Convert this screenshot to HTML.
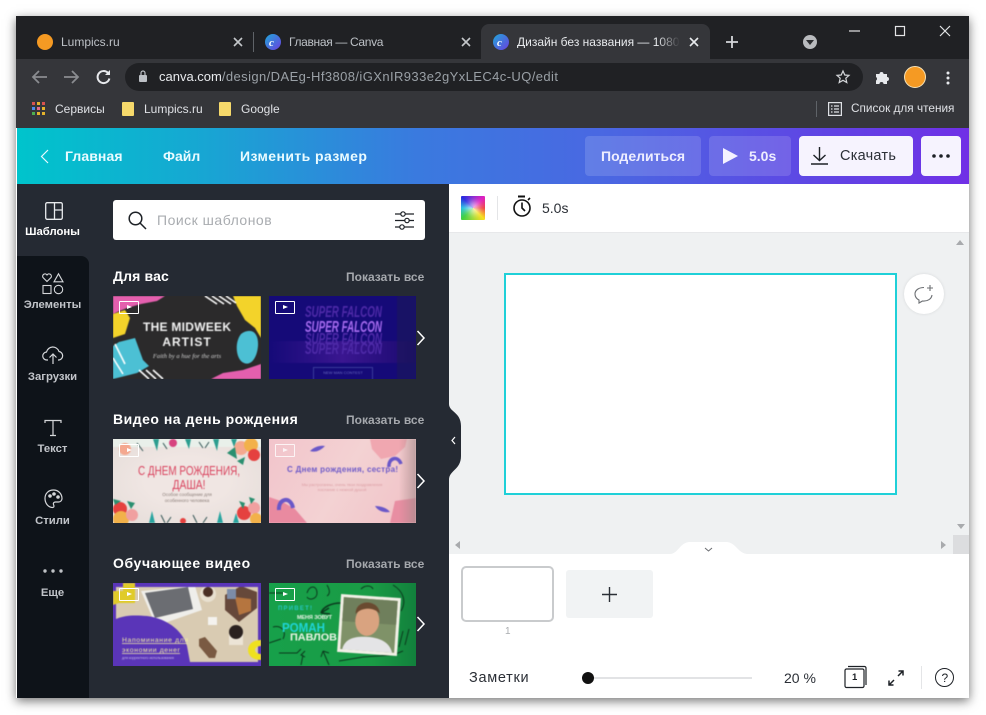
<!DOCTYPE html>
<html lang="ru"><head><meta charset="utf-8"><title>Canva</title>
<style>
*{box-sizing:border-box}
html,body{margin:0;padding:0;background:#fff;width:986px;height:715px;overflow:hidden;font-family:"Liberation Sans","Noto Sans CJK SC",sans-serif}
.a{position:absolute}
.t{position:absolute;white-space:nowrap;line-height:1}
svg{position:absolute;overflow:visible}
.b{font-weight:700}
.side{color:#c2c5ca;font-size:11.3px;font-weight:700;text-align:center;width:73px;left:16px}
.show{color:#a5a8ad;font-size:12px;font-weight:700;left:346px}
.h{color:#fff;font-size:14px;font-weight:700;left:113px}
.badge{position:absolute;left:6px;top:5px;width:20px;height:13px;border:1.5px solid #fff;border-radius:1px}
.badge:after{content:"";position:absolute;left:6.5px;top:2.500px;border-left:5px solid #fff;border-top:2.5px solid transparent;border-bottom:2.5px solid transparent}
</style></head><body>
<div class="a" id="win" style="left:16px;top:16px;width:953px;height:682px;background:#fff;box-shadow:0 3px 10px rgba(0,0,0,.55)"></div>

<!-- tab strip -->
<div class="a" style="left:16px;top:16px;width:953px;height:43px;background:#202124"></div>
<div class="a" style="left:481px;top:24px;width:229px;height:35px;background:#35363a;border-radius:8px 8px 0 0"></div>
<div class="a" style="left:16px;top:59px;width:953px;height:69px;background:#35363a"></div>
<div class="a" style="left:253px;top:32px;width:1px;height:20px;background:#5f6368"></div>

<div class="a" style="left:37px;top:34px;width:16px;height:16px;border-radius:50%;background:#f59a23"></div>
<div class="t" style="left:61px;top:36px;font-size:12px;color:#bdc1c6">Lumpics.ru</div>
<svg style="left:233px;top:37px" width="10" height="10" stroke="#c4c7ca" stroke-width="1.6"><path d="M1 1l8 8M9 1l-8 8"/></svg>

<div class="a" style="left:265px;top:34px;width:16px;height:16px;border-radius:50%;background:linear-gradient(135deg,#1fa7d8,#6b3fe0)"></div>
<div class="t" style="left:269px;top:36.5px;font:italic 700 11px 'Liberation Serif',serif;color:#fff">c</div>
<div class="t" style="left:289px;top:36px;font-size:12px;color:#bdc1c6;letter-spacing:-.33px">Главная — Canva</div>
<svg style="left:461px;top:37px" width="10" height="10" stroke="#c4c7ca" stroke-width="1.6"><path d="M1 1l8 8M9 1l-8 8"/></svg>

<div class="a" style="left:493px;top:34px;width:16px;height:16px;border-radius:50%;background:linear-gradient(135deg,#1fa7d8,#6b3fe0)"></div>
<div class="t" style="left:497px;top:36.5px;font:italic 700 11px 'Liberation Serif',serif;color:#fff">c</div>
<div class="t" style="left:517px;top:36px;font-size:12px;color:#e8eaed;width:163px;overflow:hidden;-webkit-mask-image:linear-gradient(90deg,#000 86%,transparent 100%)">Дизайн без названия — 1080</div>
<svg style="left:689px;top:37px" width="10" height="10" stroke="#e8eaed" stroke-width="1.6"><path d="M1 1l8 8M9 1l-8 8"/></svg>
<svg style="left:726px;top:36px" width="12" height="12" stroke="#d5d7da" stroke-width="1.8"><path d="M6 0v12M0 6h12"/></svg>
<div class="a" style="left:803px;top:35px;width:14px;height:14px;border-radius:50%;background:#b9bbbe"></div>
<div class="a" style="left:806px;top:40px;border-top:5px solid #2b2c2f;border-left:4px solid transparent;border-right:4px solid transparent"></div>
<svg style="left:849px;top:25px" width="112" height="12" stroke="#e4e5e7" stroke-width="1.2" fill="none"><path d="M0 6h11"/><rect x="46.5" y="1.5" width="9" height="9"/><path d="M91 1l10 10M101 1l-10 10"/></svg>

<!-- toolbar -->
<svg style="left:31px;top:68px" width="90" height="18" fill="none" stroke-width="1.8"><path d="M16 9H2M8 3L2 9l6 6" stroke="#8a8c90"/><path d="M33 9h14M41 3l6 6-6 6" stroke="#8a8c90"/><path d="M77 5a6 6 0 1 0 1.4 5.5" stroke="#e8eaed" stroke-width="2"/><path d="M79 2v5h-5z" fill="#e8eaed" stroke="none"/></svg>
<div class="a" style="left:125px;top:63px;width:738px;height:28px;border-radius:14px;background:#202124"></div>
<svg style="left:138px;top:70px" width="10" height="13"><rect x="1" y="5" width="8" height="7" rx="1" fill="#bdc1c6"/><path d="M3 5V3a2 2 0 0 1 4 0v2" stroke="#bdc1c6" fill="none" stroke-width="1.2"/></svg>
<div class="t" style="left:159px;top:70px;font-size:13px;color:#e8eaed">canva.com<span style="color:#9aa0a6;letter-spacing:.41px">/design/DAEg-Hf3808/iGXnIR933e2gYxLEC4c-UQ/edit</span></div>
<svg style="left:836px;top:70px" width="14" height="14" fill="none" stroke="#d5d7da" stroke-width="1.2"><path d="M7 1l1.8 4 4.2.4-3.2 2.8 1 4.3L7 10.3 3.2 12.500l1-4.300L1 5.400 5.200 5z"/></svg>
<svg style="left:875px;top:70px" width="15" height="14" fill="#e8eaed"><path d="M1 4h3.500a2 2 0 0 1 4 0H12v3a2 2 0 0 1 0 4v3H8.500a2 2 0 0 0-4 0H1v-3.500a2 2 0 0 0 0-3.500z"/></svg>
<div class="a" style="left:904px;top:66px;width:22px;height:22px;border-radius:50%;background:#f59a23;border:1px solid #f7e3b8"></div>
<svg style="left:946px;top:71px" width="4" height="14" fill="#e8eaed"><circle cx="2" cy="2" r="1.500"/><circle cx="2" cy="7" r="1.500"/><circle cx="2" cy="12" r="1.500"/></svg>

<!-- bookmarks -->
<svg style="left:32px;top:102px" width="14" height="14"><g fill="#d9534f"><rect width="3" height="3"/></g><rect x="5" width="3" height="3" fill="#e4b32c"/><rect x="10" width="3" height="3" fill="#d9534f"/><rect y="5" width="3" height="3" fill="#4c8bf0"/><rect x="5" y="5" width="3" height="3" fill="#e06b8b"/><rect x="10" y="5" width="3" height="3" fill="#e4b32c"/><rect y="10" width="3" height="3" fill="#4caf50"/><rect x="5" y="10" width="3" height="3" fill="#e4b32c"/><rect x="10" y="10" width="3" height="3" fill="#e4b32c"/></svg>
<div class="t" style="left:55px;top:103px;font-size:12px;color:#dfe1e5">Сервисы</div>
<div class="a" style="left:122px;top:102px;width:12px;height:14px;background:#f6d96b;border-radius:1px"></div>
<div class="t" style="left:144px;top:103px;font-size:12px;color:#dfe1e5">Lumpics.ru</div>
<div class="a" style="left:219px;top:102px;width:12px;height:14px;background:#f6d96b;border-radius:1px"></div>
<div class="t" style="left:241px;top:103px;font-size:12px;color:#dfe1e5">Google</div>
<div class="a" style="left:816px;top:101px;width:1px;height:16px;background:#5f6368"></div>
<svg style="left:828px;top:102px" width="14" height="14" fill="none" stroke="#dfe1e5" stroke-width="1.200"><rect x=".6" y=".6" width="12.800" height="12.800"/><path d="M3 4h1.500M3 7h1.500M3 10h1.500M6 4h5M6 7h5M6 10h5"/></svg>
<div class="t" style="left:851px;top:103px;font-size:11.8px;color:#dfe1e5">Список для чтения</div>

<!-- canva header -->
<div class="a" style="left:17px;top:128px;width:952px;height:56px;background:linear-gradient(90deg,#00c4cc 0%,#15a9d2 18%,#3a7adf 42%,#4a67e2 62%,#6044e4 85%,#7030e6 100%)"></div>
<svg style="left:40px;top:149px" width="10" height="15" fill="none" stroke="#e9fbff" stroke-width="1.200"><path d="M8 1L1.500 7.500 8 14"/></svg>
<div class="t b" style="left:65px;top:149px;font-size:14px;color:#e9fbff;letter-spacing:.1px">Главная</div>
<div class="t b" style="left:163px;top:149px;font-size:14px;color:#e9fbff">Файл</div>
<div class="t b" style="left:240px;top:149px;font-size:14px;color:#e9fbff;letter-spacing:.42px">Изменить размер</div>
<div class="a" style="left:585px;top:136px;width:116px;height:40px;border-radius:4px;background:rgba(255,255,255,.14)"></div>
<div class="t b" style="left:601px;top:149px;font-size:14px;color:#eef">Поделиться</div>
<div class="a" style="left:709px;top:136px;width:82px;height:40px;border-radius:4px;background:rgba(255,255,255,.14)"></div>
<div class="a" style="left:723px;top:148px;border-left:15px solid #f4f2ff;border-top:8px solid transparent;border-bottom:8px solid transparent"></div>
<div class="t b" style="left:749px;top:149px;font-size:14px;color:#eef">5.0s</div>
<div class="a" style="left:799px;top:136px;width:114px;height:40px;border-radius:4px;background:#f6f3fe"></div>
<svg style="left:810px;top:147px" width="19" height="18" fill="none" stroke="#1d2126" stroke-width="1.400"><path d="M9.500 0v13M3.500 8l6 5.500 6-5.500M1 17h17"/></svg>
<div class="t" style="left:840px;top:148.500px;font-size:14.500px;color:#2b2f36;letter-spacing:.25px">Скачать</div>
<div class="a" style="left:921px;top:136px;width:40px;height:40px;border-radius:4px;background:#f6f3fe"></div>
<svg style="left:932px;top:154px" width="18" height="4" fill="#1d2126"><circle cx="2" cy="2" r="1.800"/><circle cx="9" cy="2" r="1.800"/><circle cx="16" cy="2" r="1.800"/></svg>

<!-- left panel -->
<div class="a" style="left:17px;top:184px;width:432px;height:514px;background:#252a33"></div>
<div class="a" style="left:17px;top:256px;width:72px;height:442px;background:#0e1319;border-radius:0 8px 0 0"></div>

<svg style="left:45px;top:202px" width="18" height="18" fill="none" stroke="#e8eaed" stroke-width="1.300"><rect x=".7" y=".7" width="16.600" height="16.600" rx="1.500"/><path d="M9.500 1v16M9.500 8h8"/></svg>
<div class="t side" style="top:227px;color:#fff">Шаблоны</div>
<svg style="left:42px;top:273px" width="22" height="22" fill="none" stroke="#d5d7da" stroke-width="1.100"><path d="M5 8.500L1 4.500a2.300 2.300 0 0 1 4-2.500 2.300 2.300 0 0 1 4 2.500z"/><path d="M16.500 .8l4.500 8h-9z"/><rect x="1" y="12.500" width="8" height="8"/><circle cx="16.500" cy="16.500" r="4.200"/></svg>
<div class="t side" style="top:300px">Элементы</div>
<svg style="left:42px;top:345px" width="22" height="20" fill="none" stroke="#d5d7da" stroke-width="1.200"><path d="M6 15H5a4 4 0 0 1-.5-8A6.500 6.500 0 0 1 17 6.500 4.300 4.300 0 0 1 17 15h-1"/><path d="M11 19V9M7.500 12.500L11 9l3.500 3.500"/></svg>
<div class="t side" style="top:372px">Загрузки</div>
<svg style="left:44px;top:419px" width="18" height="18" fill="none" stroke="#d5d7da" stroke-width="1.200"><path d="M1 4V1.500h16V4M9 1.500V16.500M6 16.500h6"/></svg>
<div class="t side" style="top:444px">Текст</div>
<svg style="left:44px;top:489px" width="19" height="20" fill="none" stroke="#d5d7da" stroke-width="1.200"><path d="M9.500 1C4.500 1 1 4.500 1 9.500c0 5 3.500 9 7.500 9 2 0 1.500-2 1-3-.5-1.500.5-2.500 2-2.500h3c2 0 3.500-1.500 3.500-3.500C18 5 14.500 1 9.500 1z"/><circle cx="6" cy="7" r="1.200" fill="#d5d7da"/><circle cx="10" cy="5" r="1.200" fill="#d5d7da"/><circle cx="14" cy="8" r="1.200" fill="#d5d7da"/></svg>
<div class="t side" style="top:516px">Стили</div>
<svg style="left:43px;top:569px" width="20" height="4" fill="#bfc2c6"><circle cx="2" cy="2" r="1.700"/><circle cx="10" cy="2" r="1.700"/><circle cx="18" cy="2" r="1.700"/></svg>
<div class="t side" style="top:588px">Еще</div>

<div class="a" style="left:113px;top:200px;width:312px;height:40px;background:#fff;border-radius:3px"></div>
<svg style="left:128px;top:211px" width="19" height="19" fill="none" stroke="#1d2126" stroke-width="1.500"><circle cx="7.500" cy="7.500" r="6.300"/><path d="M12 12l6 6"/></svg>
<div class="t" style="left:157px;top:212.500px;font-size:14px;color:#a9acb0;letter-spacing:.5px">Поиск шаблонов</div>
<svg style="left:395px;top:211px" width="20" height="19" fill="#fff" stroke="#1d2126" stroke-width="1.200"><path d="M0 3h19M0 9.500h19M0 16h19"/><circle cx="8" cy="3" r="2.200"/><circle cx="12" cy="9.500" r="2.200"/><circle cx="7" cy="16" r="2.200"/></svg>

<div class="t h" style="top:269px;letter-spacing:.15px">Для вас</div><div class="t show" style="top:271px">Показать все</div>
<div class="t h" style="top:412px;letter-spacing:.5px">Видео на день рождения</div><div class="t show" style="top:414px">Показать все</div>
<div class="t h" style="top:556px;letter-spacing:.6px">Обучающее видео</div><div class="t show" style="top:558px">Показать все</div>

<!-- thumbs row 1 -->
<div class="a" style="left:113px;top:296px;width:148px;height:83px;overflow:hidden;background:#2b2a2b">
<svg width="148" height="83" style="left:0;top:0;filter:blur(.4px)">
<path d="M0 0H52L44 5 28 8 14 12 4 16 0 18z" fill="#e45fae"/><path d="M0 18L12 14 17 22 12 38 0 42z" fill="#f3d32a"/><path d="M0 50l6-4 16-4 8 22 6 6-12 7-24 6z" fill="#4cc0d4"/>
<path d="M120 0h28v42l-6-10-10-8-8-14z" fill="#f3d32a"/><path d="M128 38c8-6 18-4 17 12-1 12-7 20-14 17-8-3-10-20-3-29z" fill="#4cc0d4"/><path d="M148 68V83H98l12-6 20-3z" fill="#e45fae"/>
<path d="M92 0l12 8M99 0l12 8M106 0l12 8M113 0l10 7" stroke="#fff" stroke-width="1.600"/><path d="M2 48l10 20M0 62l10 16M26 74l10 9M33 74l10 9M40 74l10 9" stroke="#fff" stroke-width="1.600"/>
<text x="74" y="35" text-anchor="middle" font-family="Liberation Sans" font-weight="700" font-size="12" fill="#f2f2f2" textLength="88" lengthAdjust="spacing">THE MIDWEEK</text>
<text x="74" y="50" text-anchor="middle" font-family="Liberation Sans" font-weight="700" font-size="12" fill="#f2f2f2" letter-spacing="1">ARTIST</text>
<text x="74" y="62" text-anchor="middle" font-family="Liberation Serif" font-style="italic" font-size="6.500" fill="#cfcfcf">Faith by a hue for the arts</text>
</svg><div class="badge"></div></div>

<div class="a" style="left:269px;top:296px;width:147px;height:83px;overflow:hidden;background:#150a78">
<svg width="147" height="83" style="left:0;top:0;filter:blur(.5px)">
<defs><linearGradient id="g1" x1="0" x2="1"><stop offset="0" stop-color="#150a78"/><stop offset=".5" stop-color="#3a1690"/><stop offset="1" stop-color="#1a0a70"/></linearGradient></defs>
<rect y="45" width="147" height="22" fill="url(#g1)"/><rect x="128" width="19" height="83" fill="#1b1a52" opacity=".5"/>
<g font-family="Liberation Sans" font-style="italic" font-weight="700" font-size="16" fill="#4e2aa8"><text x="36" y="21" textLength="77" lengthAdjust="spacingAndGlyphs">SUPER FALCON</text><text x="36" y="48" textLength="77" lengthAdjust="spacingAndGlyphs">SUPER FALCON</text><text x="36" y="58" textLength="77" lengthAdjust="spacingAndGlyphs">SUPER FALCON</text></g>
<text x="36" y="36" font-family="Liberation Sans" font-style="italic" font-weight="700" font-size="16" fill="#a86cf0" textLength="77" lengthAdjust="spacingAndGlyphs">SUPER FALCON</text>
<rect x="44.500" y="71.500" width="59" height="14" fill="none" stroke="#3a3a9a"/><text x="74" y="78" text-anchor="middle" font-size="4" font-family="Liberation Sans" fill="#6a6ac0">NEW MAN CONTEST</text>
</svg><div class="badge"></div></div>

<!-- thumbs row 2 -->
<div class="a" style="left:113px;top:439px;width:148px;height:84px;overflow:hidden;background:radial-gradient(ellipse at center,#f0e6e3 40%,#e4dcd8 100%)">
<svg width="148" height="84" style="left:0;top:0;filter:blur(.5px)">
<g><rect width="148" height="8" fill="#e9f0ea"/><circle cx="128" cy="9" r="7" fill="#f4a88f"/><circle cx="138" cy="6" r="7" fill="#f2b14a"/><circle cx="141" cy="16" r="6" fill="#e5413f"/><path d="M114 14l8-6 2 12zM124 22l8-4-2 8z" fill="#2a8f70"/><path d="M40 0h6l-2 12zM72 0h6l-2 10zM100 0h6l-2 12zM118 0h6l-3 8z" fill="#2a9d8f"/><circle cx="60" cy="4" r="4" fill="#d7437f"/><circle cx="12" cy="10" r="6" fill="#f4a88f"/><path d="M24 4l6 8M50 4l4 6M86 3l4 6M92 9l4-6" stroke="#355" stroke-width="1"/></g>
<g><circle cx="7" cy="70" r="7" fill="#e5413f"/><circle cx="8" cy="80" r="8" fill="#f2b14a"/><circle cx="19" cy="76" r="6" fill="#f0a0a0"/><path d="M14 62l8 2-4 6zM0 60l8 2-6 4z" fill="#2a8f70"/><path d="M36 84l3-12 3 12zM104 84l3-12 3 12zM120 84l3-10 3 10z" fill="#2aa5a0"/><circle cx="70" cy="82" r="3" fill="#e5413f"/><path d="M48 76l4 8M54 84l4-6M80 76l4 8M90 84l4-6" stroke="#355" stroke-width="1"/><circle cx="131" cy="74" r="7" fill="#e5413f"/><circle cx="141" cy="69" r="6" fill="#f0a0a0"/><circle cx="143" cy="80" r="6" fill="#f2b14a"/><path d="M126 62l6 2-2 6zM136 58l6 2-4 5z" fill="#2a8f70"/></g>
<g fill="#d9435e" font-family="Liberation Sans" font-size="12.500" text-anchor="middle"><text x="76" y="36" textLength="102" lengthAdjust="spacingAndGlyphs">С ДНЕМ РОЖДЕНИЯ,</text><text x="76" y="50" textLength="33" lengthAdjust="spacingAndGlyphs">ДАША!</text></g>
<g fill="#8a7d78" font-family="Liberation Sans" font-size="4.500" text-anchor="middle"><text x="74" y="57">Особое сообщение для</text><text x="74" y="63">особенного человека</text></g>
</svg><div class="badge"></div></div>

<div class="a" style="left:269px;top:439px;width:147px;height:84px;overflow:hidden;background:linear-gradient(120deg,#f2c4cb,#f3d2d3 50%,#f1c1c6)">
<svg width="147" height="84" style="left:0;top:0;filter:blur(.4px)">
<defs><linearGradient id="g2" x1="0" x2="1"><stop offset="0" stop-color="#a88" stop-opacity="0"/><stop offset="1" stop-color="#a08a8a" stop-opacity=".65"/></linearGradient></defs>
<path d="M101 0h37l-2 8-10 9-14 3-9-10z" fill="#f0a7b0"/><path d="M0 58l12 4 14 8 12 14H0z" fill="#e98aa0"/><path d="M126 62l21-3v25h-26z" fill="#e88ea2"/><rect x="130" width="17" height="84" fill="url(#g2)"/>
<path d="M120 28c-1-9 9-12 12-3" fill="none" stroke="#6a57c8" stroke-width="3.500"/><path d="M10 71c-1-12 12-14 14-2" fill="none" stroke="#6a57c8" stroke-width="4"/><path d="M41 12c4-4 10-6 15-5-4 4-9 7-15 5zM106 67c6 0 12 2 15 6-6 1-12-1-15-6z" fill="#6a57c8"/>
<text x="18" y="33" font-family="Liberation Sans" font-size="8" font-weight="700" fill="#6d5ac8" textLength="111" lengthAdjust="spacing">С Днем рождения, сестра!</text>
<g fill="#dc9ea4" font-size="4" font-family="Liberation Sans" text-anchor="middle"><text x="73" y="47">Мы растроганны, очень твои поздравления</text><text x="73" y="52">послание с нежной душой</text></g>
</svg><div class="badge" style="opacity:.8"></div></div>

<!-- thumbs row 3 -->
<div class="a" style="left:113px;top:583px;width:148px;height:83px;overflow:hidden;background:#5a35b8">
<svg width="148" height="83" style="left:0;top:0;filter:blur(.5px)">
<rect x="3" y="4" width="142" height="75" fill="#d9cbb2"/>
<path d="M28 8L82 3l7 24-46 16z" fill="#efeeea"/><path d="M32 10l43-6 5 22-38 9z" fill="#6b6d72"/>
<path d="M112 12l16-9 16 6v16l-18 14-14-12z" fill="#66483a"/><path d="M122 14l16 2v12l-12 4z" fill="#b5753f"/><rect x="114" y="6" width="9" height="10" fill="#7c8ca8"/>
<circle cx="95" cy="11" r="8" fill="#e8e0d0"/><circle cx="95" cy="9" r="5" fill="#4a2f24"/>
<rect x="116" y="50" width="14" height="12" fill="#ece4d6"/><circle cx="123" cy="49" r="7" fill="#2a211f"/><rect x="95" y="34" width="9" height="8" fill="#f4f2ee"/><path d="M86 56l6-2 12 14-2 7-6 0-10-12z" fill="#7a5a42"/>
<path d="M3 79V36C12 32 22 32 34 33c22 3 36 16 40 30l3 16z" fill="#5a35b8"/>
<rect y="79" width="148" height="4" fill="#5a35b8"/><rect width="148" height="4" fill="#5a35b8"/>
<path d="M0 8h10V0h12v20H6l-6 2z" fill="#e0cb2a"/><path d="M148 57c-9 0-13 5-13 10s4 10 13 10v-6c-4 0-6-2-6-4s2-4 6-4z" fill="#efe11f"/>
<g fill="#f2eca6" font-family="Liberation Sans" font-size="6.800"><text x="9" y="59" textLength="66" lengthAdjust="spacing">Напоминание для</text><text x="9" y="69" textLength="58" lengthAdjust="spacing">экономии денег</text></g>
<path d="M9 60.500h66M9 70.500h58" stroke="#f2eca6" stroke-width=".8"/><text x="9" y="76" font-size="3.500" fill="#c4b6e8" font-family="Liberation Sans">для корректного использования</text>
</svg><div class="badge"></div></div>

<div class="a" style="left:269px;top:583px;width:147px;height:83px;overflow:hidden;background:linear-gradient(90deg,#17a04a,#1a9b45 70%,#12803c)">
<svg width="147" height="83" style="left:0;top:0;filter:blur(.5px)">
<g fill="none" stroke="#0b3a1e" stroke-width="1"><path d="M38 10c2-8 10-8 10 0 0 6-8 8-10 4M58 2c3 5 3 9 0 11M92 6c4-4 10-4 12 0M124 2c10 6 14 16 8 26M0 10h14M4 44c8-2 14 4 10 12M0 60l12-4M10 70h18l4-4M34 72l-2 10M36 68l-4 4 4 2M54 68l6 14M54 68l-2 6M54 68l6 2M70 78l24-4 30-2 10-4M128 46l-4 16M134 48l-4 16M140 46l-4 16"/><path d="M72 20c-10 0-18 4-20 10M52 30l8-5M52 30l9 1" stroke-width="1.600"/></g>
<g transform="rotate(4 100 42)"><rect x="70" y="13" width="60" height="58" fill="#f2f0e6"/><rect x="73" y="16" width="54" height="52" fill="#7f9268"/><rect x="73" y="16" width="54" height="24" fill="#6f7f5c"/><path d="M75 68c2-12 14-14 24-14s22 2 26 14z" fill="#e4e4e6"/><ellipse cx="98" cy="38" rx="12" ry="15" fill="#d9a380"/><path d="M86 32c-2-15 22-17 24-2-6-6-18-6-24 2z" fill="#6a4a30"/></g>
<text x="9" y="27" font-size="6" font-weight="700" font-family="Liberation Sans" fill="#27c6c2" textLength="34" lengthAdjust="spacing">ПРИВЕТ!</text>
<text x="28" y="36" font-size="5.500" font-weight="700" font-family="Liberation Sans" fill="#ecf5e8" textLength="35" lengthAdjust="spacing">МЕНЯ ЗОВУТ</text>
<text x="13" y="49" font-size="13" font-weight="700" font-family="Liberation Sans" fill="#1fd4d6" textLength="43" lengthAdjust="spacingAndGlyphs">РОМАН</text>
<text x="21" y="57.500" font-size="10.500" font-weight="700" font-family="Liberation Sans" fill="#ecf5e8" textLength="47" lengthAdjust="spacingAndGlyphs">ПАВЛОВ</text>
</svg><div class="badge"></div></div>

<svg style="left:416px;top:329px" width="10" height="304" fill="none" stroke="#fff" stroke-width="1.500"><path d="M1.500 2l6.500 7-6.500 7M1.500 145l6.500 7-6.500 7M1.500 288l6.500 7-6.500 7"/></svg>

<!-- editor -->
<div class="a" style="left:449px;top:184px;width:520px;height:514px;background:#fff"></div>
<div class="a" style="left:449px;top:232px;width:520px;height:322px;background:#eff1f2;border-top:1px solid #e7e8ea"></div>
<div class="a" style="left:953px;top:535px;width:16px;height:19px;background:#dcdddf"></div>
<svg style="left:449px;top:404px" width="12" height="76"><path d="M0 0c0 8 12 8 12 22v30c0 14-12 14-12 24z" fill="#252a33"/><path d="M6 33l-3 3.500 3 3.500" fill="none" stroke="#fff" stroke-width="1.200"/></svg>
<svg style="left:670px;top:541px" width="78" height="14"><path d="M0 13c8 0 10-12 20-12h36c10 0 12 12 22 12z" fill="#fff"/><path d="M35 7l3.500 3 3.500-3" fill="none" stroke="#6a6c70" stroke-width="1"/></svg>
<div class="a" style="left:956px;top:240px;border-bottom:5px solid #a8aaad;border-left:4px solid transparent;border-right:4px solid transparent"></div>
<div class="a" style="left:957px;top:524px;border-top:5px solid #a8aaad;border-left:4px solid transparent;border-right:4px solid transparent"></div>
<div class="a" style="left:455px;top:541px;border-right:5px solid #a8aaad;border-top:4px solid transparent;border-bottom:4px solid transparent"></div>
<div class="a" style="left:941px;top:541px;border-left:5px solid #a8aaad;border-top:4px solid transparent;border-bottom:4px solid transparent"></div>

<div class="a" style="left:461px;top:196px;width:24px;height:24px;overflow:hidden;background:conic-gradient(from 45deg,#e020c0,#f04040 45deg,#f7e020 90deg,#40d040 180deg,#20c0e0 225deg,#2a2ae0 270deg,#e020c0 360deg);border-radius:1px"><div style="position:absolute;left:6px;top:6px;width:12px;height:12px;border-radius:50%;background:#fff;filter:blur(4px);opacity:.85"></div></div>
<div class="a" style="left:497px;top:196px;width:1px;height:24px;background:#e4e5e7"></div>
<svg style="left:512px;top:195px" width="21" height="23" fill="none" stroke="#111" stroke-width="1.600"><path d="M6 1.500h7" stroke-width="2"/><circle cx="10" cy="13" r="8"/><path d="M10 7.500V13l3 3M16 5l2-2"/></svg>
<div class="t" style="left:542px;top:201px;font-size:14px;color:#2b2f36">5.0s</div>

<div class="a" style="left:504px;top:273px;width:393px;height:222px;background:#fff;border:2px solid #1fd0d8"></div>
<div class="a" style="left:904px;top:274px;width:40px;height:40px;border-radius:50%;background:#fff;box-shadow:0 0 3px rgba(0,0,0,.1)"></div>
<svg style="left:914px;top:285px" width="20" height="19" fill="none" stroke="#6c6f73" stroke-width="1.100"><path d="M10 2.500C5 2.500 1 5 1 9c0 3 2 5 4 6l0 3 3.500-2c5 .500 9-2 9.500-6"/><path d="M16 0v6M13 3h6"/></svg>

<!-- pages -->
<div class="a" style="left:461px;top:566px;width:93px;height:56px;background:#fff;border:2px solid #c9cbcd;border-radius:5px"></div>
<div class="t" style="left:505px;top:627px;font-size:10px;color:#a9acb0">1</div>
<div class="a" style="left:566px;top:570px;width:87px;height:48px;background:#f1f3f4;border-radius:3px"></div>
<svg style="left:602px;top:587px" width="15" height="15" stroke="#2b2f36" stroke-width="1.400"><path d="M7.500 0v15M0 7.500h15"/></svg>

<div class="t" style="left:469px;top:671px;font-size:14.500px;color:#2b2f36;letter-spacing:.7px">Заметки</div>
<div class="a" style="left:590px;top:677px;width:162px;height:2px;background:#e2e3e5"></div>
<div class="a" style="left:582px;top:672px;width:12px;height:12px;border-radius:50%;background:#111"></div>
<div class="t" style="left:784px;top:671px;font-size:14px;color:#2b2f36">20 %</div>
<svg style="left:844px;top:665px" width="23" height="24" fill="none" stroke="#1d2126" stroke-width="1.200"><rect x="1" y="4" width="19" height="18.500" rx="1.500"/><path d="M4 1.500h16.500a1.500 1.500 0 0 1 1.500 1.500v17"/></svg>
<div class="t b" style="left:852px;top:673px;font-size:9.500px;color:#1d2126">1</div>
<svg style="left:888px;top:670px" width="16" height="16" fill="none" stroke="#1d2126" stroke-width="1.500"><path d="M10 6l5-5M10.500 1H15v4.500M6 10l-5 5M1 10.500V15h4.500"/></svg>
<div class="a" style="left:921px;top:666px;width:1px;height:23px;background:#e4e5e7"></div>
<div class="a" style="left:935px;top:668px;width:19px;height:19px;border:1.500px solid #1d2126;border-radius:50%"></div>
<div class="t" style="left:941.500px;top:672px;font-size:12px;color:#1d2126">?</div>
</body></html>
